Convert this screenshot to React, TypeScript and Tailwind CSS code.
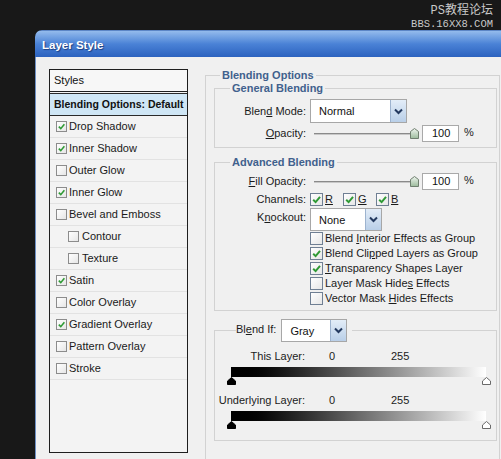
import React from "react";

const font = "font-['Tahoma','Liberation_Sans',sans-serif]";

type StyleRow = { label: string; checked: boolean; indent?: boolean };

const styleRows: StyleRow[] = [
  { label: "Drop Shadow", checked: true },
  { label: "Inner Shadow", checked: true },
  { label: "Outer Glow", checked: false },
  { label: "Inner Glow", checked: true },
  { label: "Bevel and Emboss", checked: false },
  { label: "Contour", checked: false, indent: true },
  { label: "Texture", checked: false, indent: true },
  { label: "Satin", checked: true },
  { label: "Color Overlay", checked: false },
  { label: "Gradient Overlay", checked: true },
  { label: "Pattern Overlay", checked: false },
  { label: "Stroke", checked: false },
];

function Check({ size = 11 }: { size?: number }) {
  return (
    <svg width={size - 2} height={size - 2} viewBox="0 0 10 10">
      <path d="M2 5.2 L4.2 7.4 L8.2 2.6" fill="none" stroke="#2f9a35" strokeWidth="1.8" />
    </svg>
  );
}

function Box({ checked, big }: { checked: boolean; big?: boolean }) {
  return (
    <span
      className={`flex shrink-0 items-center justify-center border bg-linear-to-br from-white to-[#e6e6e6] ${
        big ? "h-[13px] w-[13px] border-[#6f7f93]" : "h-[11px] w-[11px] border-[#8c8c8c]"
      }`}
    >
      {checked ? <Check size={big ? 13 : 11} /> : null}
    </span>
  );
}

function Select({ value, w, h }: { value: string; w: string; h: string }) {
  return (
    <div className={`flex ${w} ${h} border border-[#a7a7a7] bg-white`}>
      <span className="flex-1 pl-[8px] pt-[5px] text-[11px] leading-[13px] text-[#111]">{value}</span>
      <span className="flex w-[16px] items-center justify-center border-l border-[#9db3cf] bg-linear-to-b from-[#e3edf8] to-[#b9cfe8]">
        <svg width="9" height="7" viewBox="0 0 9 7">
          <path d="M1 1.5 L4.5 5 L8 1.5" fill="none" stroke="#23395f" strokeWidth="2" />
        </svg>
      </span>
    </div>
  );
}

function SliderThumb() {
  return (
    <svg width="9" height="11" viewBox="0 0 9 11">
      <defs>
        <linearGradient id="thumb" x1="0" y1="0" x2="0" y2="1">
          <stop offset="0" stopColor="#eef5ee" />
          <stop offset="1" stopColor="#9cbb9c" />
        </linearGradient>
      </defs>
      <path d="M4.5 0.5 L8.5 3.5 V10.5 H0.5 V3.5 Z" fill="url(#thumb)" stroke="#6f7f6f" />
    </svg>
  );
}

function Tri({ dark }: { dark?: boolean }) {
  return (
    <svg width="9" height="8" viewBox="0 0 9 8">
      <path
        d="M4.5 0.5 L8.5 4 V7.5 H0.5 V4 Z"
        fill={dark ? "#000" : "#fff"}
        stroke={dark ? "#000" : "#6a6a6a"}
      />
    </svg>
  );
}

function SliderRow({ label }: { label: React.ReactNode }) {
  return (
    <div className="flex h-[17px] items-center">
      <span className="w-[91px] text-right text-[11px] text-[#1b1b1b]">{label}</span>
      <div className="ml-[8px] flex items-center">
        <div className="h-[2px] w-[96px] border-b border-[#c8c8c8] bg-[#8a8a8a]" />
        <SliderThumb />
      </div>
      <div className="ml-[3px] flex h-[17px] w-[37px] items-center border border-[#a9a9a9] bg-white pl-[9px] text-[11px] text-[#111]">
        100
      </div>
      <span className="ml-[5px] -mt-[3px] text-[11px] text-[#222]">%</span>
    </div>
  );
}

function Legend({ children, offset = "ml-[15px]" }: { children: React.ReactNode; offset?: string }) {
  return (
    <legend className={`${offset} px-[2px] text-[11px] font-bold leading-[13px] text-[#41618d]`}>
      {children}
    </legend>
  );
}

export default function App() {
  return (
    <div className={`relative h-[459px] w-[501px] overflow-hidden bg-[#181818] pl-[35px] pt-[30px] ${font}`}>
      <div className="absolute right-[8px] top-[5px] flex flex-col items-end leading-none text-[#c9c9c9]">
        <span className="font-['Liberation_Mono','Noto_Sans_CJK_SC',monospace] text-[12px]">PS教程论坛</span>
        <span className="mt-[2px] font-['Liberation_Mono',monospace] text-[10.5px]">BBS.16XX8.COM</span>
      </div>

      <div className="flex h-full w-[480px] flex-col overflow-hidden rounded-tl-[7px]">
        <div className="flex h-[27px] shrink-0 items-center border-t border-[#5c86c6] bg-linear-to-b from-[#94bbec] via-[#4a82d6] to-[#2c62bf] pl-[7px] pt-[3px]">
          <span className="text-[11.5px] font-bold text-white [text-shadow:1px_1px_1px_#1c3f80]">Layer Style</span>
        </div>

        <div className="flex min-h-0 flex-1 items-start border-l border-[#6d8fc4] bg-[#f0f0f0]">
          {/* styles list */}
          <div className="ml-[13px] mt-[12px] flex h-[384px] w-[139px] shrink-0 flex-col border border-[#1e1e1e] bg-[#f3f3f3]">
            <div className="flex h-[22px] items-center border-b border-[#1e1e1e] bg-[#f7f7f7] pl-[4px] text-[11px] text-[#111]">
              Styles
            </div>
            <div className="mt-[1px] flex h-[23px] items-center border-y border-[#2a2a2a] bg-[#cfe6f5] pl-[4px] text-[10.5px] font-bold text-[#111]">
              Blending Options: Default
            </div>
            {styleRows.map((row) => (
              <div
                key={row.label}
                className={`flex h-[22px] items-center gap-[2px] border-b border-[#e2e2e2] ${
                  row.indent ? "pl-[18px]" : "pl-[6px]"
                }`}
              >
                <Box checked={row.checked} />
                <span className={`text-[11px] text-[#1a1a1a] ${row.indent ? "ml-[1px]" : ""}`}>{row.label}</span>
              </div>
            ))}
          </div>

          {/* blending options */}
          <fieldset className="ml-[17px] mt-[12px] w-[295px] shrink-0 border border-[#d2d2d2] pb-[30px] pl-[8px] pr-[2px]">
            <Legend offset="ml-[6px]">Blending Options</Legend>

            <fieldset className="border border-[#d2d2d2] pb-[5px]">
              <Legend>General Blending</Legend>
              <div className="mt-[4px] flex h-[24px] items-center">
                <span className="w-[91px] text-right text-[11px] text-[#1b1b1b]">
                  Blen<u>d</u> Mode:
                </span>
                <div className="ml-[4px]">
                  <Select value="Normal" w="w-[97px]" h="h-[24px]" />
                </div>
              </div>
              <div className="mt-[2px]">
                <SliderRow
                  label={
                    <>
                      <u>O</u>pacity:
                    </>
                  }
                />
              </div>
            </fieldset>

            <fieldset className="mt-[8px] border border-[#d2d2d2] pb-[4px]">
              <Legend>Advanced Blending</Legend>
              <div className="mt-[4px]">
                <SliderRow
                  label={
                    <>
                      <u>F</u>ill Opacity:
                    </>
                  }
                />
              </div>
              <div className="mt-[2px] flex h-[14px] items-center">
                <span className="w-[91px] text-right text-[11px] text-[#1b1b1b]">Channels:</span>
                <div className="ml-[4px] flex">
                  {["R", "G", "B"].map((c) => (
                    <div key={c} className="flex w-[33px] items-center gap-[2px]">
                      <Box checked big />
                      <u className="text-[11px] text-[#1b1b1b]">{c}</u>
                    </div>
                  ))}
                </div>
              </div>
              <div className="mt-[2px] flex h-[23px] items-start">
                <span className="mt-[1px] w-[91px] text-right text-[11px] text-[#1b1b1b]">
                  K<u>n</u>ockout:
                </span>
                <div className="ml-[4px]">
                  <Select value="None" w="w-[72px]" h="h-[23px]" />
                </div>
              </div>
              <div className="ml-[95px] flex flex-col">
                {[
                  { checked: false, label: <>Blend <u>I</u>nterior Effects as Group</> },
                  { checked: true, label: <>Blend Cli<u>p</u>ped Layers as Group</> },
                  { checked: true, label: <><u>T</u>ransparency Shapes Layer</> },
                  { checked: false, label: <>Layer Mask Hide<u>s</u> Effects</> },
                  { checked: false, label: <>Vector Mask <u>H</u>ides Effects</> },
                ].map((item, i) => (
                  <div key={i} className="flex h-[15px] items-center gap-[2px]">
                    <Box checked={item.checked} big />
                    <span className="text-[11px] text-[#1b1b1b]">{item.label}</span>
                  </div>
                ))}
              </div>
            </fieldset>

            <fieldset className="mt-[8px] border border-[#d2d2d2] pb-[11px]">
              <legend className="ml-[21px] flex items-center gap-[5px] pr-[5px]">
                <span className="-mt-[3px] text-[11px] text-[#1b1b1b]">
                  Bl<u>e</u>nd If:
                </span>
                <Select value="Gray" w="w-[66px]" h="h-[23px]" />
              </legend>

              <div className="mt-[7px] flex h-[14px] items-center text-[11px] text-[#1b1b1b]">
                <span className="w-[90px] text-right">This Layer:</span>
                <span className="ml-[24px] w-[62px]">0</span>
                <span>255</span>
              </div>
              <div className="ml-[16px] mt-[4px] h-[10px] w-[255px] bg-linear-to-r from-black via-[#6a6a6a] to-white" />
              <div className="ml-[12px] flex w-[264px] justify-between">
                <Tri dark />
                <Tri />
              </div>

              <div className="mt-[8px] flex h-[14px] items-center text-[11px] text-[#1b1b1b]">
                <span className="w-[90px] text-right">Underlying Layer:</span>
                <span className="ml-[24px] w-[62px]">0</span>
                <span>255</span>
              </div>
              <div className="ml-[16px] mt-[4px] h-[10px] w-[255px] bg-linear-to-r from-black via-[#6a6a6a] to-white" />
              <div className="ml-[12px] flex w-[264px] justify-between">
                <Tri dark />
                <Tri />
              </div>
            </fieldset>
          </fieldset>
        </div>
      </div>
    </div>
  );
}
